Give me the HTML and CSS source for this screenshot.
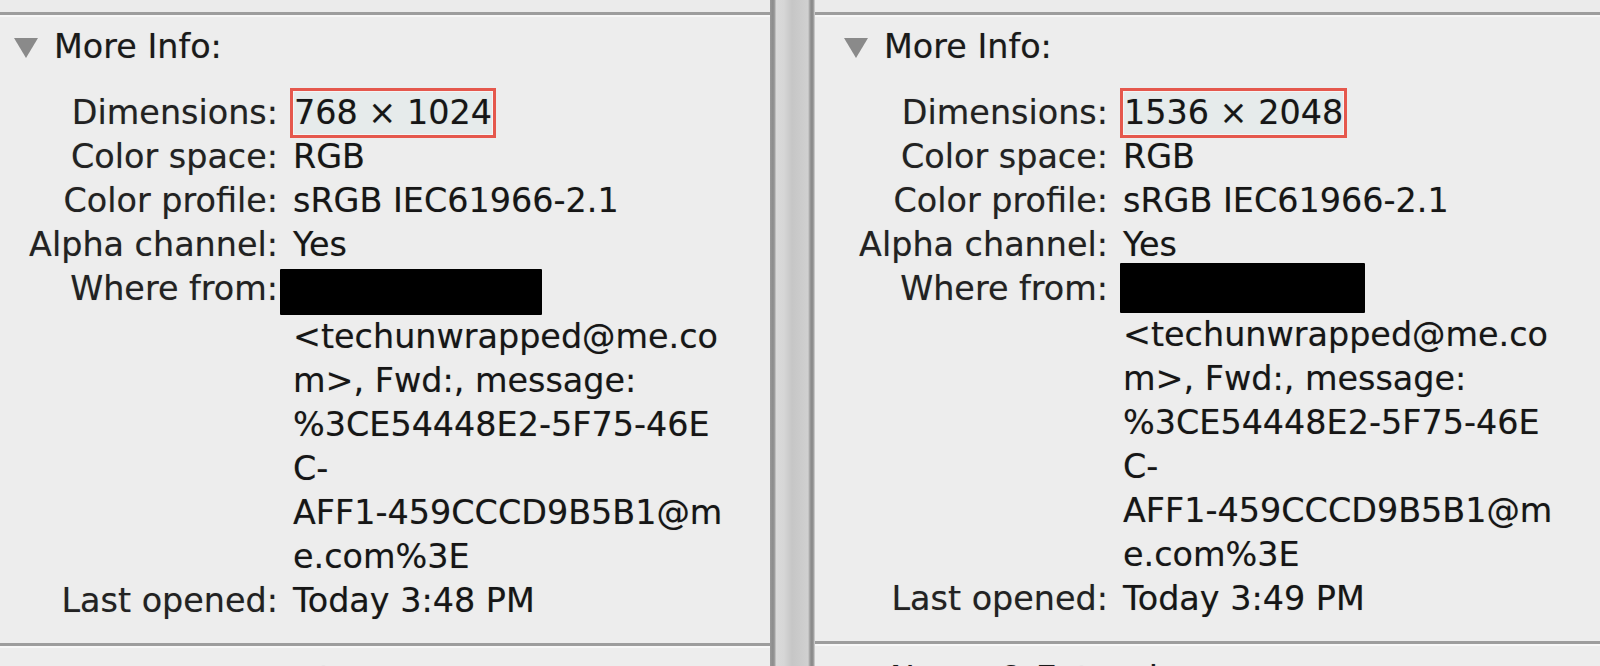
FILE: index.html
```html
<!DOCTYPE html>
<html lang="en">
<head>
<meta charset="utf-8">
<title>More Info comparison</title>
<link rel="stylesheet" href="styles.css">
</head>
<body>
<div class="window">
  <section class="pane pane-left">
    <div class="prev"></div>
    <div class="rule"></div>
    <div class="inner">
      <div class="heading"><span class="tri-down"></span><span class="htext">More Info:</span></div>
      <div class="info">
        <div class="lbl">Dimensions:</div><div class="val"><span class="hl">768 × 1024</span></div>
        <div class="lbl">Color space:</div><div class="val">RGB</div>
        <div class="lbl">Color profile:</div><div class="val">sRGB IEC61966-2.1</div>
        <div class="lbl">Alpha channel:</div><div class="val">Yes</div>
        <div class="lbl">Where from:</div><div class="val"><span class="redact redact-left"></span></div>
        <div class="lbl"></div>
        <div class="val wrap">
          <span class="ln">&lt;techunwrapped@me.co</span>
          <span class="ln">m&gt;, Fwd:, message:</span>
          <span class="ln">%3CE54448E2-5F75-46E</span>
          <span class="ln">C-</span>
          <span class="ln">AFF1-459CCCD9B5B1@m</span>
          <span class="ln">e.com%3E</span>
        </div>
        <div class="lbl">Last opened:</div><div class="val">Today 3:48 PM</div>
      </div>
    </div>
    <div class="rule rule-bottom"></div>
    <div class="inner">
      <div class="heading heading-next"><span class="tri-right"></span><span class="htext">Name &amp; Extension:</span></div>
    </div>
  </section>
  <div class="splitter"></div>
  <section class="pane pane-right">
    <div class="prev"></div>
    <div class="rule"></div>
    <div class="inner">
      <div class="heading"><span class="tri-down"></span><span class="htext">More Info:</span></div>
      <div class="info">
        <div class="lbl">Dimensions:</div><div class="val"><span class="hl">1536 × 2048</span></div>
        <div class="lbl">Color space:</div><div class="val">RGB</div>
        <div class="lbl">Color profile:</div><div class="val">sRGB IEC61966-2.1</div>
        <div class="lbl">Alpha channel:</div><div class="val">Yes</div>
        <div class="lbl">Where from:</div><div class="val"><span class="redact redact-right"></span></div>
        <div class="lbl"></div>
        <div class="val wrap">
          <span class="ln">&lt;techunwrapped@me.co</span>
          <span class="ln">m&gt;, Fwd:, message:</span>
          <span class="ln">%3CE54448E2-5F75-46E</span>
          <span class="ln">C-</span>
          <span class="ln">AFF1-459CCCD9B5B1@m</span>
          <span class="ln">e.com%3E</span>
        </div>
        <div class="lbl">Last opened:</div><div class="val">Today 3:49 PM</div>
      </div>
    </div>
    <div class="rule rule-bottom"></div>
    <div class="inner">
      <div class="heading heading-next"><span class="tri-right"></span><span class="htext">Name &amp; Extension:</span></div>
    </div>
  </section>
</div>
</body>
</html>
```

FILE: styles.css
```css
html, body {
  margin: 0;
  padding: 0;
  width: 1600px;
  height: 666px;
  overflow: hidden;
  background: #ececec;
}

.window {
  display: flex;
  height: 666px;
  font-family: "DejaVu Sans", "Liberation Sans", sans-serif;
  font-size: 33.4px;
  color: #161616;
  text-shadow: 0 0 1px rgba(0, 0, 0, 0.3);
}

.pane {
  background: #ededed;
  overflow: hidden;
}

.pane-left {
  width: 770px;
  flex: none;
}

.pane-right {
  flex: 1;
}

.splitter {
  width: 45px;
  flex: none;
  background: linear-gradient(to right,
    #9a9a9a 0px, #8c8c8c 3px, #a4a4a4 5px,
    #dadada 6px, #d6d6d6 14px, #c6c6c6 22px, #cbcbcb 30px, #d0d0d0 38px,
    #9c9c9c 40px, #858585 42px, #a8a8a8 44px, #e6e6e6 45px);
}

.prev {
  height: 12px;
  background: #ebebeb;
}

.rule {
  height: 3px;
  background: #9d9d9d;
  border-bottom: 2px solid #f7f7f7;
}

.rule-bottom {
  margin-top: 20px;
}

.pane-left .inner {
  padding-left: 14px;
}

.pane-right .inner {
  padding-left: 29px;
}

.heading {
  display: flex;
  align-items: center;
  height: 44px;
  line-height: 44px;
  margin-top: 8px;
}

.heading-next {
  margin-top: 11px;
}

.tri-down {
  width: 0;
  height: 0;
  border-left: 12px solid transparent;
  border-right: 12px solid transparent;
  border-top: 20px solid #8a8a8a;
  margin-right: 16px;
  margin-top: 2px;
}

.tri-right {
  width: 0;
  height: 0;
  border-top: 12px solid transparent;
  border-bottom: 12px solid transparent;
  border-left: 20px solid #6f6f6f;
  margin-right: 20px;
  margin-left: 6px;
}

.htext {
  color: #1a1a1a;
}

.info {
  display: grid;
  grid-template-columns: 264px auto;
  column-gap: 15px;
  margin-top: 22px;
  line-height: 44px;
}

.lbl {
  text-align: right;
  white-space: nowrap;
  color: #222;
}

.val {
  white-space: nowrap;
  color: #161616;
}

.wrap {
  display: flex;
  flex-direction: column;
}

.ln {
  display: block;
  height: 44px;
}

.hl {
  display: inline-block;
  height: 44px;
  padding: 0 1px;
  background: #e6ebeb;
  outline: 3px solid #e5584d;
  box-shadow: inset 0 0 0 1px #f4f4f4;
  vertical-align: top;
}

.redact {
  display: inline-block;
  background: #000;
  border-radius: 1px;
  vertical-align: top;
}

.redact-left {
  width: 262px;
  height: 46px;
  margin-left: -13px;
  margin-top: 2px;
}

.redact-right {
  width: 245px;
  height: 50px;
  margin-left: -3px;
  margin-top: -4px;
}
```
